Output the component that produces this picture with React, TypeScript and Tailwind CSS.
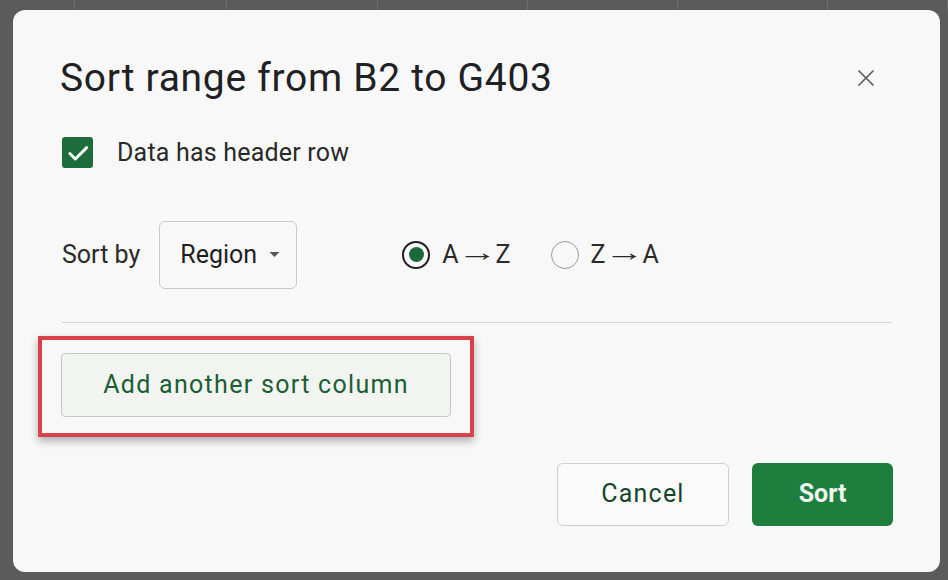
import { X } from "lucide-react";

function Radio({ checked }: { checked?: boolean }) {
  return (
    <span
      className={`flex h-[28px] w-[28px] items-center justify-center rounded-full ${
        checked ? "border-2 border-[#1f1f1f]" : "border-[1.5px] border-[#9a9a9a]"
      }`}
    >
      {checked && <span className="h-[15px] w-[15px] rounded-full bg-[#1a6a3a]" />}
    </span>
  );
}

function Arrow({ from, to }: { from: string; to: string }) {
  return (
    <span className="flex items-center text-[25px] text-[#2a2a2a]">
      {from}
      <span className="mx-[3px] inline-block w-[31px] -translate-y-[2px] scale-x-[1.6] text-center">→</span>
      {to}
    </span>
  );
}

export default function App() {
  return (
    <div className="flex h-[580px] w-[948px] flex-col bg-[#5b5b5b] font-['Roboto',sans-serif]">
      <div className="flex h-[10px] shrink-0">
        {[75, 152, 151, 150, 150, 150, 120].map((w, i) => (
          <div key={i} className="h-full border-r border-[#6e6e6e]" style={{ width: w }} />
        ))}
      </div>
      <div className="ml-[13px] flex h-[562px] w-[927px] flex-col rounded-[12px] bg-[#f8f8f8] pl-[47px] pr-[48px]">
        <div className="flex items-center justify-between pt-[40px]">
          <h1 className="text-[39px] leading-[56px] font-normal tracking-[0.7px] text-[#202124]">
            Sort range from B2 to G403
          </h1>
          <X className="mr-[12px] h-[28px] w-[28px] text-[#5f5f5f]" strokeWidth={1.5} />
        </div>
        <div className="mt-[28px] flex items-center">
          <span className="ml-[2px] flex h-[31px] w-[31px] items-center justify-center rounded-[3px] bg-[#1e6b3c]">
            <svg viewBox="0 0 24 24" className="h-[26px] w-[26px]">
              <path d="M4.5 12.5l5 5L20 7" fill="none" stroke="#f4fbf6" strokeWidth="2.8" strokeLinecap="round" strokeLinejoin="round" />
            </svg>
          </span>
          <span className="ml-[24px] text-[25px] tracking-[0.2px] text-[#2a2a2a]">Data has header row</span>
        </div>
        <div className="mt-[49px] flex items-center">
          <span className="ml-[2px] text-[25px] text-[#2a2a2a]">Sort by</span>
          <div className="ml-[19px] flex h-[68px] w-[138px] items-center rounded-[6px] border border-[#c9c9c9] pl-[20px]">
            <span className="text-[25px] text-[#1f1f1f]">Region</span>
            <svg viewBox="0 0 10 5" className="ml-[12px] h-[5px] w-[11px]">
              <path d="M0 0h10L5 5z" fill="#555" />
            </svg>
          </div>
          <div className="ml-[105px] flex items-center gap-[12px]">
            <Radio checked />
            <Arrow from="A" to="Z" />
          </div>
          <div className="ml-[40px] flex items-center gap-[12px]">
            <Radio />
            <Arrow from="Z" to="A" />
          </div>
        </div>
        <div className="mt-[33px] ml-[2px] h-px bg-[#d6d6d6]" />
        <div className="-ml-[22px] mt-[13px] w-[436px] border-[4px] border-[#d8424a] px-[19px] pt-[13px] pb-[16px] shadow-[0_4px_8px_rgba(0,0,0,0.3)]">
          <div className="flex h-[64px] items-center justify-center rounded-[4px] border border-[#c5c9c5] bg-[#f1f4f1] text-[25px] tracking-[1.3px] text-[#1b5e34]">
            Add another sort column
          </div>
        </div>
        <div className="mt-[26px] mr-[-1px] flex justify-end gap-[23px]">
          <button className="flex h-[63px] w-[172px] items-center justify-center rounded-[6px] border border-[#cfcfcf] bg-[#fafafa] text-[25px] tracking-[1.2px] text-[#17452a]">
            Cancel
          </button>
          <button className="flex h-[63px] w-[141px] items-center justify-center rounded-[6px] bg-[#1e7e3e] text-[25px] font-bold text-[#eef7f0]">
            Sort
          </button>
        </div>
      </div>
    </div>
  );
}
